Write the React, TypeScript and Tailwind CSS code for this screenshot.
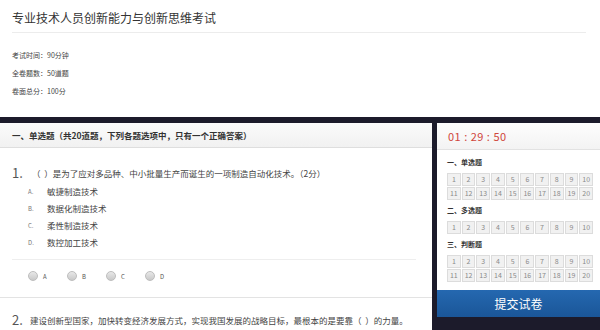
import React from 'react';

const font = { fontFamily: '"Noto Sans CJK SC", "Noto Sans", sans-serif' };

const options = [
  { key: 'A', text: '敏捷制造技术' },
  { key: 'B', text: '数据化制造技术' },
  { key: 'C', text: '柔性制造技术' },
  { key: 'D', text: '数控加工技术' },
];

const NumberGrid = ({ rows }: { rows: number }) => {
  const nums = Array.from({ length: rows * 10 }, (_, i) => (i % 10) + 1 + Math.floor(i / 10) * 10);
  return (
    <div className="grid grid-cols-10 gap-[1px] w-[146px]">
      {nums.map((n) => (
        <div
          key={n}
          className="h-[13px] flex items-center justify-center bg-[#f1f1f1] border border-[#dcdcdc] text-[7px] text-[#8a8a8a]"
        >
          {n}
        </div>
      ))}
    </div>
  );
};

const Section = ({ title, rows }: { title: string; rows: number }) => (
  <div className="flex flex-col">
    <div className="h-[21px] flex items-center text-[7px] font-bold text-[#333]">{title}</div>
    <NumberGrid rows={rows} />
  </div>
);

export default function App() {
  return (
    <div className="w-[600px] h-[330px] overflow-hidden bg-[#1c1b2b]" style={font}>
      {/* exam info */}
      <div className="h-[117px] bg-white px-[12px] pt-[8px]">
        <div className="h-[20px] flex items-center text-[12px] text-[#333]">专业技术人员创新能力与创新思维考试</div>
        <div className="mt-[4px] mr-[2px] border-t border-[#ececec]" />
        <div className="mt-[13px] flex flex-col text-[7px] text-[#444]">
          <div className="h-[18px] flex items-center">考试时间：90分钟</div>
          <div className="h-[18px] flex items-center">全卷题数：50道题</div>
          <div className="h-[18px] flex items-center">卷面总分：100分</div>
        </div>
      </div>

      <div className="mt-[6px] flex gap-[5px]">
        {/* questions */}
        <div className="w-[432px] h-[210px] bg-white flex flex-col">
          <div className="h-[25px] shrink-0 flex items-center pl-[12px] bg-gradient-to-b from-[#fbfbfb] to-[#f1f1f1] border-b border-[#dedede] text-[8.5px] font-bold text-[#333]">
            一、单选题（共20道题，下列各题选项中，只有一个正确答案）
          </div>
          <div className="px-[12px] pt-[16px] pb-[11px] border-b border-[#e3e3e3]">
            <div className="h-[18px] flex items-center">
              <span className="w-[20px] text-[13px] text-[#555]">1.</span>
              <span className="text-[8.5px] text-[#444]">（&nbsp;&nbsp;）是为了应对多品种、中小批量生产而诞生的一项制造自动化技术。（2分）</span>
            </div>
            <div className="mt-[1px] pl-[16px] flex flex-col">
              {options.map((o) => (
                <div key={o.key} className="h-[17px] flex items-center">
                  <span className="w-[19px] text-[6px] text-[#777]">{o.key}.</span>
                  <span className="text-[8.5px] text-[#444]">{o.text}</span>
                </div>
              ))}
            </div>
            <div className="mt-[8px] mr-[4px] border-t border-[#eeeeee]" />
            <div className="mt-[6px] h-[20px] pl-[16px] flex items-center">
              {options.map((o) => (
                <div key={o.key} className="w-[39px] flex items-center gap-[5px]">
                  <span className="w-[10px] h-[10px] rounded-full bg-gradient-to-b from-[#e8e8e8] to-[#c9c9c9] border border-[#bdbdbd]" />
                  <span className="text-[6px] text-[#555]">{o.key}</span>
                </div>
              ))}
            </div>
          </div>
          <div className="px-[12px] pt-[13px] h-[18px] box-content flex items-center">
            <span className="w-[18px] text-[13px] text-[#555]">2.</span>
            <span className="text-[8.5px] text-[#444]">建设创新型国家，加快转变经济发展方式，实现我国发展的战略目标，最根本的是要靠（&nbsp;&nbsp;）的力量。</span>
          </div>
        </div>

        {/* answer sheet */}
        <div className="flex-1 flex flex-col">
          <div className="h-[167px] bg-white flex flex-col">
            <div className="h-[27px] shrink-0 flex items-center pl-[11px] bg-gradient-to-b from-[#fdfdfd] to-[#f3f3f3] border-b border-[#e2e2e2] text-[11px] text-[#d0463c] tracking-[0.5px]">
              01 : 29 : 50
            </div>
            <div className="pl-[10px] pt-[2px] flex flex-col">
              <Section title="一、单选题" rows={2} />
              <Section title="二、多选题" rows={1} />
              <Section title="三、判断题" rows={2} />
            </div>
          </div>
          <div className="h-[27px] flex items-center justify-center bg-gradient-to-b from-[#2568b0] to-[#1a5698] text-[12px] text-white">
            提交试卷
          </div>
        </div>
      </div>
    </div>
  );
}
